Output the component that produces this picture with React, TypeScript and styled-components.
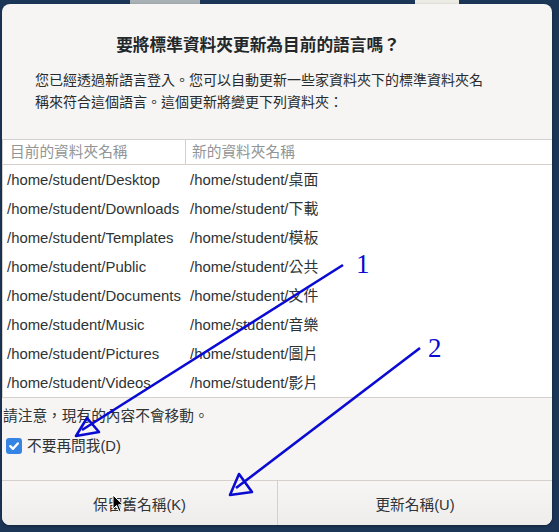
import React from "react";
import styled, { createGlobalStyle } from "styled-components";

const GlobalStyle = createGlobalStyle`
  html, body {
    margin: 0;
    padding: 0;
    background: #1c3657;
  }
  * {
    box-sizing: border-box;
  }
`;

const folders = [
  ["Desktop", "桌面"],
  ["Downloads", "下載"],
  ["Templates", "模板"],
  ["Public", "公共"],
  ["Documents", "文件"],
  ["Music", "音樂"],
  ["Pictures", "圖片"],
  ["Videos", "影片"],
];

const Desktop = styled.div`
  position: relative;
  width: 559px;
  height: 532px;
  overflow: hidden;
  padding: 4px 0 0 2px;
  background:
    linear-gradient(
        to right,
        transparent 130px,
        #a8b1b5 130px,
        #a8b1b5 200px,
        transparent 200px,
        transparent 415px,
        #ecebe4 415px,
        #ecebe4 459px,
        transparent 459px
      )
      top left / 100% 4px no-repeat,
    #1c3657;
  font-family: "Liberation Sans", "Noto Sans CJK TC", sans-serif;
  color: #2e3436;
`;

const Dialog = styled.div`
  width: 550px;
  height: 521px;
  background: #f6f5f4;
  border-radius: 8px;
  display: flex;
  flex-direction: column;
  overflow: hidden;
  box-shadow: 0 1px 3px rgba(0, 0, 0, 0.35);
`;

const Title = styled.h2`
  margin: 28px 0 0;
  font-family: "Noto Sans CJK TC", sans-serif;
  font-size: 16.7px;
  line-height: 24px;
  font-weight: 700;
  color: #232729;
  text-align: center;
  padding-right: 38px;
`;

const Message = styled.p`
  margin: 12px 0 0;
  padding: 0 62px 0 33px;
  font-family: "Noto Sans CJK TC", sans-serif;
  font-size: 14px;
  line-height: 22px;
  color: #272b2d;
`;

const Table = styled.div`
  margin-top: 27px;
  background: #ffffff;
  border-top: 1px solid #d5d0cc;
  border-bottom: 1px solid #d5d0cc;
  border-left: 1px solid #d5d0cc;
  display: grid;
  grid-template-columns: 183px 1fr;
`;

const HeadCell = styled.div<{ $first?: boolean }>`
  height: 25px;
  line-height: 24px;
  font-size: 14.7px;
  color: #929595;
  border-bottom: 1px solid #d5d0cc;
  border-right: ${(p) => (p.$first ? "1px solid #d5d0cc" : "none")};
  padding-left: ${(p) => (p.$first ? "7px" : "6px")};
`;

const Cell = styled.div`
  height: 29px;
  line-height: 29px;
  padding-top: 1px;
  font-size: 14.9px;
  white-space: nowrap;
  padding-left: 4px;
`;

const Note = styled.div`
  margin-top: 8px;
  padding-left: 1px;
  font-size: 14.7px;
  line-height: 20px;
`;

const CheckRow = styled.label`
  margin-top: 10px;
  display: flex;
  align-items: center;
  gap: 5px;
  padding-left: 4px;
  font-size: 14.7px;
  line-height: 20px;
`;

const Box = styled.span`
  width: 16px;
  height: 16px;
  border-radius: 3px;
  background: #3584e4;
  display: flex;
  align-items: center;
  justify-content: center;
`;

const ButtonBar = styled.div`
  margin-top: auto;
  height: 45px;
  display: grid;
  grid-template-columns: 275px 1fr;
  border-top: 1px solid #d5d0cc;
`;

const Button = styled.button<{ $last?: boolean }>`
  border: none;
  border-left: ${(p) => (p.$last ? "1px solid #d5d0cc" : "none")};
  background: linear-gradient(to bottom, #f7f6f5, #efedec);
  font-family: inherit;
  font-size: 14.7px;
  color: #2e3436;
  padding: 0;
`;

const Annotations = styled.svg`
  position: absolute;
  left: 0;
  top: 0;
  pointer-events: none;
`;

const Cursor = styled.svg`
  position: absolute;
  left: 112px;
  top: 494px;
`;

const App = () => (
  <Desktop>
    <GlobalStyle />
    <Dialog>
      <Title>要將標準資料夾更新為目前的語言嗎？</Title>
      <Message>
        您已經透過新語言登入。您可以自動更新一些家資料夾下的標準資料夾名稱來符合這個語言。這個更新將變更下列資料夾：
      </Message>
      <Table>
        <HeadCell $first>目前的資料夾名稱</HeadCell>
        <HeadCell>新的資料夾名稱</HeadCell>
        {folders.map(([en, zh]) => (
          <React.Fragment key={en}>
            <Cell>/home/student/{en}</Cell>
            <Cell>/home/student/{zh}</Cell>
          </React.Fragment>
        ))}
      </Table>
      <Note>請注意，現有的內容不會移動。</Note>
      <CheckRow>
        <Box>
          <svg width="12" height="12" viewBox="0 0 12 12">
            <path
              d="M2.3 6.2 L5 8.8 L9.8 3.5"
              fill="none"
              stroke="#fff"
              strokeWidth="2.4"
              strokeLinecap="round"
              strokeLinejoin="round"
            />
          </svg>
        </Box>
        不要再問我(D)
      </CheckRow>
      <ButtonBar>
        <Button>保留舊名稱(K)</Button>
        <Button $last>更新名稱(U)</Button>
      </ButtonBar>
    </Dialog>

    <Annotations width="559" height="532" viewBox="0 0 559 532">
      <g stroke="#0a0ad2" strokeWidth="2.6" fill="none" strokeLinejoin="round">
        <line x1="343" y1="265" x2="82" y2="430" />
        <polygon points="87,418 99,432 76,436" />
        <line x1="420" y1="348" x2="236" y2="488" />
        <polygon points="239,474 252,492 230,495" />
      </g>
      <g fill="#0a0ad2" fontFamily="'Liberation Serif', serif" fontSize="27">
        <text x="356" y="273">1</text>
        <text x="428" y="357">2</text>
      </g>
    </Annotations>

    <Cursor width="12" height="19" viewBox="0 0 12 19">
      <path
        d="M1 1 L1 15 L4.5 11.5 L7 17.5 L9 16.6 L6.6 10.8 L11 10.8 Z"
        fill="#000"
        stroke="#fff"
        strokeWidth="1"
      />
    </Cursor>
  </Desktop>
);

export default App;
